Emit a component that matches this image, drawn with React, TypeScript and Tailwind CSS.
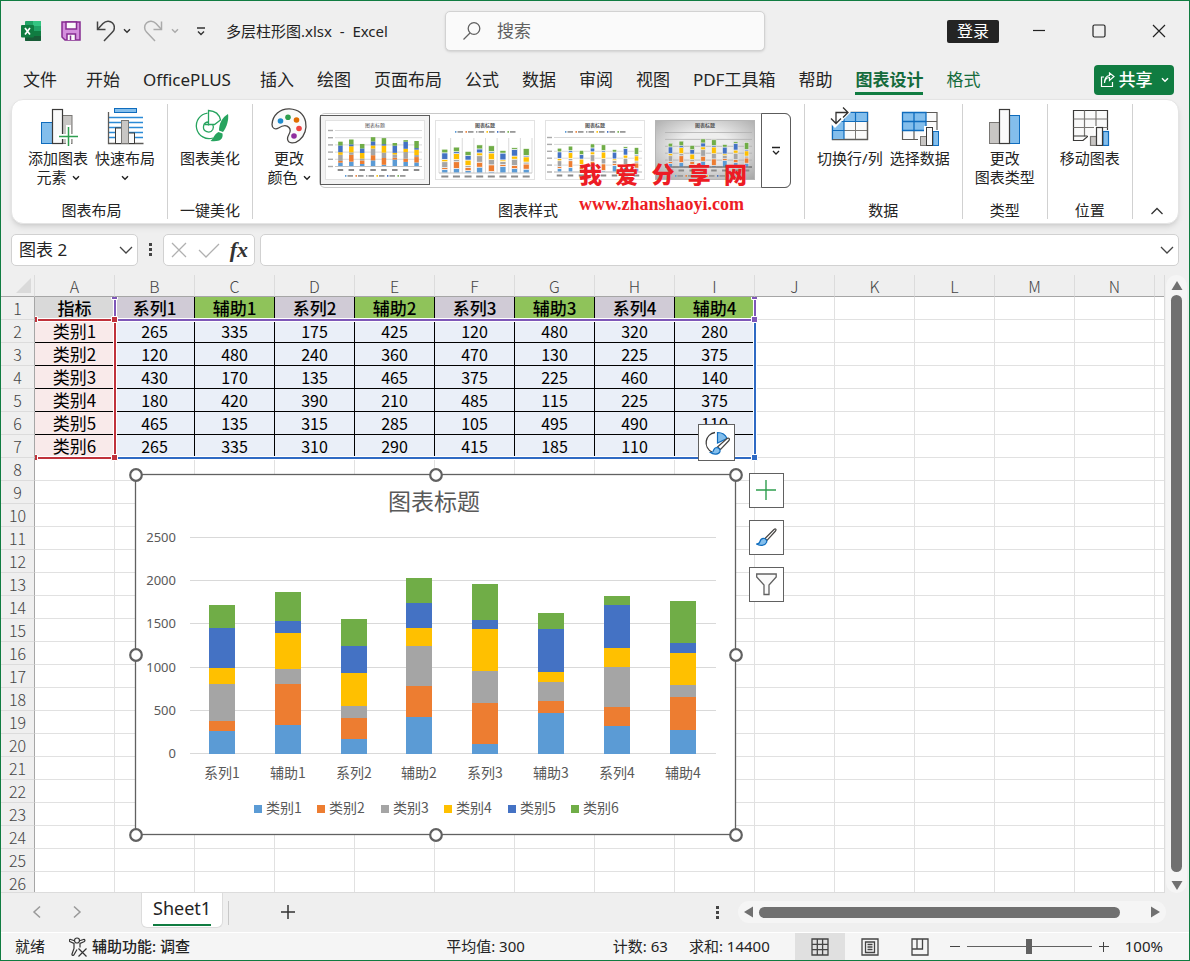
import { useState } from "react"
import type { ReactNode } from "react"

const columns = ["A", "B", "C", "D", "E", "F", "G", "H", "I", "J", "K", "L", "M", "N"]
const rowCount = 26

const seriesNames = ["系列1", "辅助1", "系列2", "辅助2", "系列3", "辅助3", "系列4", "辅助4"]
const categories = [
    { name: "类别1", color: "#5b9bd5", values: [265, 335, 175, 425, 120, 480, 320, 280] },
    { name: "类别2", color: "#ed7d31", values: [120, 480, 240, 360, 470, 130, 225, 375] },
    { name: "类别3", color: "#a5a5a5", values: [430, 170, 135, 465, 375, 225, 460, 140] },
    { name: "类别4", color: "#ffc000", values: [180, 420, 390, 210, 485, 115, 225, 375] },
    { name: "类别5", color: "#4472c4", values: [465, 135, 315, 285, 105, 495, 490, 110] },
    { name: "类别6", color: "#70ad47", values: [265, 335, 310, 290, 415, 185, 110, 490] },
]

const tabs = ["文件", "开始", "OfficePLUS", "插入", "绘图", "页面布局", "公式", "数据", "审阅", "视图", "PDF工具箱", "帮助", "图表设计", "格式"]

// Stacked segments of one column, measured in chart units from the axis
function stack(index: number) {
    let base = 0
    return categories.map((category) => {
        const value = category.values[index]
        const segment = { color: category.color, from: base, to: base + value }
        base += value
        return segment
    })
}

function Chevron({ className = "" }: { className?: string }) {
    return (
        <svg width="8" height="6" viewBox="0 0 8 6" fill="none" stroke="currentColor" strokeWidth="1.4" className={className}>
            <path d="M1 1.2 4 4.3 7 1.2" />
        </svg>
    )
}

/* ---------- ribbon icons ---------- */

function AddElementIcon() {
    return (
        <svg width="40" height="40" fill="none">
            <rect x="3.5" y="16.5" width="11" height="21" fill="#83beec" stroke="#0f6cbd" />
            <rect x="24.5" y="9.5" width="9.5" height="28" fill="#c8c6c4" stroke="#797774" />
            <rect x="14.5" y="3.5" width="10" height="34" fill="#fafafa" stroke="#3b3a39" strokeWidth="1.2" />
            <path d="M30.5 19v22M19 30.5h21" stroke="#fff" strokeWidth="5" />
            <path d="M30.5 21v19M21 30.5h19" stroke="#2f9e4f" strokeWidth="1.5" />
        </svg>
    )
}

function QuickLayoutIcon() {
    return (
        <svg width="40" height="40" fill="none">
            <rect x="9.5" y="2.5" width="22" height="4" fill="#83beec" stroke="#0f6cbd" />
            <path d="M4 11.5h34M4 16.5h34M4 21.5h34M4 26.5h34M4 31.5h34" stroke="#2b8ad6" strokeWidth="1.3" />
            <path d="M3.5 6v31.5h35" stroke="#5d5b58" strokeWidth="1.3" />
            <rect x="10.5" y="22" width="6.5" height="15.5" fill="#fafafa" stroke="#3b3a39" />
            <rect x="23.5" y="27" width="6" height="10.5" fill="#fafafa" stroke="#3b3a39" />
            <rect x="16.5" y="14.5" width="7" height="23" fill="#c8c6c4" stroke="#797774" />
        </svg>
    )
}

function BeautifyIcon() {
    return (
        <svg width="40" height="40" fill="none" stroke="#27a45f" strokeWidth="1.3">
            <path d="M17.5 7.1A12.8 12.8 0 1 0 23 32" />
            <path d="M18.5 16V4.500C26 5 29.500 9 30.500 14l-6 4.500H14.500" />
            <path d="M18.500 16a5 5 0 1 0 4.300 7.500c.8-1.700.8-3.300 0-4.800M18.500 16v3.500" />
            <path d="M38 8c1 5-1 13-5 18l-4-1.5c0-7 3-13 9-16.5z" fill="#27a45f" stroke="none" />
            <path d="M28.500 26l4 1.500c1 6-3 8.500-12 7.500 3-2 3.500-7 8-9z" fill="#27a45f" stroke="none" />
        </svg>
    )
}

function PaletteIcon() {
    return (
        <svg width="40" height="40" fill="none">
            <path d="M20.5 2.8C11 2.5 3.5 9 3 18.5c0 4 3.5 5.5 6.5 3.5s7.5-4 10.5-.5c4 4.500-2 7-1.500 11.500.5 5 7.500 5 12 1C41 25.500 39.500 4 20.500 2.800z" fill="#fafafa" stroke="#484644" strokeWidth="1.3" />
            <circle cx="11.5" cy="15" r="2.8" fill="#1e8bcd" />
            <circle cx="19" cy="11.3" r="2.8" fill="#2f9e4f" />
            <circle cx="27.5" cy="14" r="2.8" fill="#e06c00" />
            <circle cx="30" cy="22.5" r="2.8" fill="#ef4444" />
            <circle cx="25" cy="30" r="2.8" fill="#8f2d9e" />
        </svg>
    )
}

function SmallBars() {
    return (
        <g>
            <path d="M18 40V29h6v-9h9v4h6v16z" fill="#fff" />
            <rect x="20.5" y="30.5" width="6" height="9" fill="#c8c6c4" stroke="#797774" />
            <rect x="33" y="25.5" width="5.5" height="14" fill="#83beec" stroke="#0f6cbd" />
            <rect x="26.500" y="21.5" width="6" height="18" fill="#fafafa" stroke="#3b3a39" />
        </g>
    )
}

function SwitchRowColumnIcon() {
    return (
        <svg width="40" height="40" fill="none">
            <path d="M2.5 6.5h35v27h-35z" fill="#fafafa" stroke="#5d5b58" strokeWidth="1.3" />
            <path d="M2.5 15.5h35v-9h-35zM2.5 6.5h11.500v27h-11.500z" fill="#83beec" />
            <path d="M14 24.5h23.5M25.5 15.5v18" stroke="#797774" />
            <path d="M14 6.5h23.5v9H14zM25.5 6.5v9M2.5 6.5H14v27H2.5zM2.5 24.5H14M2.5 15.5H14" stroke="#0f6cbd" strokeWidth="1.2" />
            <path d="M37.500 15.500v18H2.500" stroke="#5d5b58" strokeWidth="1.2" />
            <path d="M0 0h15l6 6L5 22l-5-5z" fill="#fff" />
            <path d="M6 17.500V6.500h12M13 1.500l5 5-5 5M1 12.500l5 5 5-5" stroke="#323130" strokeWidth="1.3" />
        </svg>
    )
}

function SelectDataIcon() {
    return (
        <svg width="40" height="40" fill="none">
            <path d="M2.5 6.5H37v27H2.5z" fill="#fafafa" />
            <path d="M2.5 6.5H26v18H2.5z" fill="#83beec" />
            <path d="M26 6.5h11v27H2.5v-9M26 15.5h11M14 24.5v9M26 24.5h11" stroke="#5d5b58" strokeWidth="1.2" />
            <path d="M2.5 6.5H26v18H2.5zM14 6.5v18M2.5 15.5H26" stroke="#0f6cbd" strokeWidth="1.3" />
            <SmallBars />
        </svg>
    )
}

function ChartTypeIcon() {
    return (
        <svg width="40" height="40" fill="none">
            <rect x="4.5" y="16.5" width="10" height="21" fill="#c8c6c4" stroke="#797774" />
            <rect x="24.5" y="9.5" width="10" height="28" fill="#83beec" stroke="#0f6cbd" />
            <rect x="14.5" y="3.5" width="10" height="34" fill="#fafafa" stroke="#3b3a39" strokeWidth="1.2" />
        </svg>
    )
}

function MoveChartIcon() {
    return (
        <svg width="40" height="40" fill="none" strokeWidth="1.2">
            <path d="M3.5 4.5h34v26h-20l-4.5 4H3.5z" fill="#fafafa" stroke="#3b3a39" />
            <path d="M3.5 13h34M3.5 21.5h34M14.5 4.5v26M26 4.5v26" stroke="#797774" />
            <path d="M3.5 30h14" stroke="#3b3a39" />
            <SmallBars />
        </svg>
    )
}

function BrushIcon() {
    return (
        <svg width="21" height="21" fill="none">
            <path d="M9 11.5 18 2.500c1.500-1.300 2.700 0 1.500 1.500L11 13.500z" fill="#fff" stroke="#484644" strokeWidth="1.2" />
            <path d="M8.500 11.500c-2.500-.5-4 1-4.500 3-.4 1.500-1.500 2.500-3.500 2.500 3 2 8.500 2 10-1.500.8-2-.5-3.500-2-4z" fill="#83beec" stroke="#0f6cbd" strokeWidth="1.2" />
        </svg>
    )
}

/* ---------- title bar and ribbon tabs ---------- */

function TitleBar() {
    return (
        <header className="flex h-[60px] shrink-0 items-center">
            <div className="flex w-[444px] shrink-0 items-center pl-5">
                <svg width="20" height="20" viewBox="0 0 20 20" aria-label="Excel">
                    <rect x="4" width="16" height="20" rx="1" fill="#21a366" />
                    <path d="M12 0h7a1 1 0 0 1 1 1v4h-8z" fill="#33c481" />
                    <path d="M4 5h8v5H4z" fill="#107c41" />
                    <path d="M12 10h8v5h-8z" fill="#107c41" />
                    <path d="M4 10h8v5H4z" fill="#185c37" />
                    <path d="M4 15h16v4a1 1 0 0 1-1 1H5a1 1 0 0 1-1-1z" fill="#185c37" />
                    <rect y="4" width="13" height="12.5" rx="1" fill="#107c41" />
                    <path d="M4 7l5 6.5M9 7l-5 6.5" stroke="#fff" strokeWidth="1.7" />
                </svg>
                <button aria-label="保存" className="ml-5">
                    <svg width="20" height="20" fill="none" stroke="#862d91" strokeWidth="1.5">
                        <path d="M1 1h18v18H4l-3-3z" fill="#d48fdd" />
                        <path d="M5 1h10.5v7H5z" fill="#fafafa" />
                        <path d="M6 19v-6h8.5v6" fill="#fafafa" />
                        <path d="M9.5 14.5V19" />
                    </svg>
                </button>
                <button aria-label="撤消" className="ml-[14px]">
                    <svg width="20" height="22" fill="none" stroke="#444" strokeWidth="1.5">
                        <path d="M2.500 1.500V9.500h8" />
                        <path d="M2.500 9.500 8 3.500c3-3 7-3 9.500-.5s2.500 6.500 0 9L9 21" />
                    </svg>
                </button>
                <button aria-label="撤消列表" className="ml-2 text-[#333]"><Chevron /></button>
                <button aria-label="恢复" className="ml-3">
                    <svg width="20" height="22" fill="none" stroke="#aaa" strokeWidth="1.5">
                        <path d="M18.500 1.500v8h-8" />
                        <path d="M18.500 9.500 13 3.500C10 .5 6 .5 3.500 3s-2.500 6.500 0 9l8.500 9" />
                    </svg>
                </button>
                <button aria-label="恢复列表" className="ml-2 text-[#aaa]"><Chevron /></button>
                <button aria-label="自定义快速访问工具栏" className="ml-[17px]">
                    <svg width="10" height="10" fill="none" stroke="#333" strokeWidth="1.4">
                        <path d="M1 2h8M2 5.500l3 3 3-3" />
                    </svg>
                </button>
                <h1 className="ml-5 text-[15px] whitespace-pre">多层柱形图.xlsx  -  Excel</h1>
            </div>
            <label className="flex h-10 w-80 items-center rounded-[5px] border border-[#d2d2d2] bg-[#fafafa] px-4 shadow-sm">
                <svg width="19" height="20" fill="none" stroke="#616161" strokeWidth="1.3">
                    <circle cx="12" cy="7.5" r="5.8" />
                    <path d="M8 12 1.5 18.5" />
                </svg>
                <input type="search" aria-label="搜索" placeholder="搜索" className="ml-4 min-w-0 flex-1 bg-transparent text-[17px] outline-none placeholder:text-[#616161]" />
            </label>
            <div className="ml-auto flex items-center">
                <button className="mr-[10px] h-[23px] rounded-xs bg-[#242424] px-[10px] text-base leading-[23px] text-white">登录</button>
                <button aria-label="最小化" className="flex h-10 w-[60px] items-center justify-center">
                    <svg width="14" height="14" stroke="#222" strokeWidth="1.2"><path d="M1 6.5h12" /></svg>
                </button>
                <button aria-label="最大化" className="flex h-10 w-[60px] items-center justify-center">
                    <svg width="14" height="14" fill="none" stroke="#222" strokeWidth="1.2"><rect x="1" y="1" width="12" height="12" rx="1.5" /></svg>
                </button>
                <button aria-label="关闭" className="flex h-10 w-[60px] items-center justify-center">
                    <svg width="14" height="14" stroke="#222" strokeWidth="1.2"><path d="M1 1l12 12M13 1 1 13" /></svg>
                </button>
            </div>
        </header>
    )
}

function TabBar() {
    const [active, setActive] = useState("图表设计")

    const tabClass = (tab: string) => {
        if (tab === active) return "border-[#107c41] font-bold text-[#146b3c]"
        if (tab === "格式" || tab === "图表设计") return "border-transparent text-[#146b3c]"
        if (tab === "OfficePLUS") return "border-transparent pr-[6px]"
        return "border-transparent"
    }

    return (
        <nav className="flex h-[38px] shrink-0 items-start pr-[15px] pl-[22px]">
            <div className="flex gap-[23px] pt-[7px]">
                {tabs.map((tab) => (
                    <button
                        key={tab}
                        onClick={() => setActive(tab)}
                        className={`border-b-[3px] pb-px text-[17px] leading-[23px] whitespace-nowrap first:mr-[6px] ${tabClass(tab)}`}
                    >
                        {tab}
                    </button>
                ))}
            </div>
            <button className="mt-1 ml-auto flex h-[30px] w-20 shrink-0 items-center justify-center rounded bg-[#107c41] text-[17px] leading-[22px] font-medium text-white">
                <svg width="15" height="16" fill="none" stroke="#fff" strokeWidth="1.2">
                    <path d="M4 5H1.5v9.500h11V10" />
                    <path d="M4.500 11c.5-4 2.500-5.500 5-5.500V8.500l4.500-4L9.500 1v2.500C6 4 4.500 7 4.500 11z" />
                </svg>
                <span className="mr-2 ml-1">共享</span>
                <Chevron />
            </button>
        </nav>
    )
}

/* ---------- ribbon ---------- */

type GroupProps = { label: string; className?: string; children: ReactNode }

function RibbonGroup({ label, className = "px-3", children }: GroupProps) {
    return (
        <section className={`relative flex shrink-0 flex-col justify-between border-r border-[#d1d1d1] ${className}`}>
            <div className="flex items-start gap-[7px] pt-[2px]">{children}</div>
            <h2 className="-mb-px text-center text-[15px] leading-[19px]">{label}</h2>
        </section>
    )
}

type RibbonButtonProps = { icon: ReactNode; lines: string[]; menu?: boolean }

function RibbonButton({ icon, lines, menu }: RibbonButtonProps) {
    return (
        <button className="flex min-w-12 flex-col items-center text-[15px] leading-[19px] whitespace-nowrap">
            {icon}
            {lines.map((line, i) => (
                <span key={line} className={`flex items-center gap-[5px] ${i === 0 ? "mt-[3px]" : ""}`}>
                    {line}
                    {menu && i === 1 && <Chevron />}
                </span>
            ))}
            {menu && lines.length === 1 && <Chevron className="mt-[7px]" />}
        </button>
    )
}

type StyleVariant = "plain" | "dropped" | "lined" | "shaded"

// Small preview of the same chart in one of the gallery styles
function StylePreview({ variant }: { variant: StyleVariant }) {
    const shaded = variant === "shaded"
    const plain = variant === "plain"
    const base = plain ? 46.5 : variant === "dropped" ? 53 : shaded ? 47 : 52
    const scale = plain ? 0.0144 : 0.0138
    const left = plain || shaded ? 10 : variant === "dropped" ? 4 : 9
    const step = (97 - left) / 8
    const legendY = plain || shaded ? 55 : 11

    return (
        <svg width="100" height="60" viewBox="0 0 100 60">
            <defs>
                <radialGradient id="previewShade" cx="0.5" cy="0.45" r="0.75">
                    <stop offset="0.35" stopColor="#eeeeee" />
                    <stop offset="1" stopColor="#a3a3a3" />
                </radialGradient>
            </defs>
            <rect x="0.5" y="0.5" width="99" height="59" fill={shaded ? "url(#previewShade)" : "#fff"} stroke={shaded ? "#b5b5b5" : "#e2e2e2"} />
            <text x="50" y="7" textAnchor="middle" fontSize="5" fontWeight={plain ? 400 : 700} fill="#555">图表标题</text>
            {variant === "dropped"
                ? [0, 1, 2, 3, 4, 5, 6, 7, 8].map((i) => (
                    <path key={i} d={`M${left + i * step} 18v35`} stroke="#d0d0d0" strokeWidth="0.8" />
                ))
                : [0, 1, 2, 3, 4, 5].map((i) => (
                    <g key={i}>
                        <path d={`M${left} ${base - i * 500 * scale}H97`} stroke={shaded ? "#b0b0b0" : "#cfcfcf"} strokeWidth="0.8" />
                        {!shaded && <rect x={left - 7} y={base - i * 500 * scale - 0.7} width="5" height="1.4" fill="#aaa" />}
                    </g>
                ))}
            {seriesNames.map((name, i) => {
                const width = variant === "dropped" ? 6 : 4.5
                const x = left + step * (i + 0.5) - width / 2
                return (
                    <g key={name}>
                        {stack(i).map((s) => (
                            <rect
                                key={s.color}
                                x={x}
                                y={base - s.to * scale}
                                width={width}
                                height={(s.to - s.from) * scale}
                                fill={s.color}
                                stroke={plain ? "none" : shaded ? "#ececec" : "#fff"}
                                strokeWidth="0.6"
                            />
                        ))}
                        <rect x={x - 0.5} y={base + 2.5} width={width + 1} height="2" fill="#8a8a8a" />
                    </g>
                )
            })}
            <path d={`M${left} ${base}H97`} stroke={shaded ? "#555" : "#c4c4c4"} strokeWidth="1" />
            {categories.map((c, i) => (
                <g key={c.name}>
                    <rect x={20 + i * 10.5} y={legendY} width="1.4" height="1.8" fill={c.color} />
                    <rect x={22.5 + i * 10.5} y={legendY} width="5.5" height="1.8" fill="#9a9a9a" />
                </g>
            ))}
        </svg>
    )
}

function StyleGallery() {
    const [selected, setSelected] = useState<StyleVariant>("plain")
    const variants: StyleVariant[] = ["plain", "dropped", "lined", "shaded"]

    return (
        <div className="-ml-px mt-[7px] flex h-[75px] w-[472px] rounded-md border border-[#c8c8c8]">
            {variants.map((variant, i) => (
                <button
                    key={variant}
                    aria-label={`样式 ${i + 1}`}
                    onClick={() => setSelected(variant)}
                    className={`mt-px flex h-[70px] w-[110px] shrink-0 items-center justify-center border ${variant === selected ? "border-[#5c5c5c] bg-[#f3f3f3]" : "border-transparent"}`}
                >
                    <StylePreview variant={variant} />
                </button>
            ))}
            <button aria-label="其他样式" className="-my-px -mr-px ml-auto flex w-[30px] items-center justify-center rounded-r-md border border-[#5c5c5c]">
                <svg width="10" height="10" fill="none" stroke="#222" strokeWidth="1.3">
                    <path d="M1 1.5h8M2 5l3 3 3-3" />
                </svg>
            </button>
        </div>
    )
}

function Ribbon() {
    return (
        <div className="mx-[10px] flex shrink-0 overflow-hidden rounded-xl border border-[#e4e4e4] bg-white py-1 shadow-md">
            <div className="flex h-[115px] flex-1">
                <RibbonGroup label="图表布局" className="pr-3 pl-4">
                    <RibbonButton icon={<AddElementIcon />} lines={["添加图表", "元素"]} menu />
                    <RibbonButton icon={<QuickLayoutIcon />} lines={["快速布局"]} menu />
                </RibbonGroup>
                <RibbonGroup label="一键美化">
                    <RibbonButton icon={<BeautifyIcon />} lines={["图表美化"]} />
                </RibbonGroup>
                <RibbonGroup label="图表样式" className="pr-[13px] pl-3">
                    <RibbonButton icon={<PaletteIcon />} lines={["更改", "颜色"]} menu />
                    <StyleGallery />
                    <div className="pointer-events-none absolute top-[56px] left-[326px] w-[168px] text-[#ed1c24]">
                        <div className="flex justify-between text-[23px] leading-[28px] font-black">
                            {["我", "爱", "分", "享", "网"].map((ch) => <span key={ch}>{ch}</span>)}
                        </div>
                        <div className="mt-1 font-['Liberation_Serif',serif] text-[18px] leading-6 font-bold">www.zhanshaoyi.com</div>
                    </div>
                </RibbonGroup>
                <RibbonGroup label="数据">
                    <RibbonButton icon={<SwitchRowColumnIcon />} lines={["切换行/列"]} />
                    <RibbonButton icon={<SelectDataIcon />} lines={["选择数据"]} />
                </RibbonGroup>
                <RibbonGroup label="类型">
                    <RibbonButton icon={<ChartTypeIcon />} lines={["更改", "图表类型"]} />
                </RibbonGroup>
                <RibbonGroup label="位置">
                    <RibbonButton icon={<MoveChartIcon />} lines={["移动图表"]} />
                </RibbonGroup>
                <button aria-label="折叠功能区" className="mt-auto mr-[14px] ml-auto">
                    <svg width="14" height="14" fill="none" stroke="#333" strokeWidth="1.3"><path d="M1.5 9 7 3.5 12.5 9" /></svg>
                </button>
            </div>
        </div>
    )
}

function FormulaBar() {
    return (
        <div className="mt-[10px] flex h-8 shrink-0 items-center px-[10px]">
            <div className="flex h-full w-[127px] items-center rounded-[5px] border border-[#d1d1d1] bg-white pr-1 pl-[7px]">
                <input aria-label="名称框" defaultValue="图表 2" className="w-0 flex-1 bg-transparent text-[17px] outline-none" />
                <button aria-label="名称列表">
                    <svg width="14" height="10" fill="none" stroke="#444" strokeWidth="1.3"><path d="M1 2l6 6 6-6" /></svg>
                </button>
            </div>
            <svg width="4" height="14" className="mr-[10px] ml-[11px]" fill="#444">
                <path d="M0 0h3v3H0zM0 5h3v3H0zM0 10h3v3H0z" />
            </svg>
            <div className="flex h-full w-[92px] items-center justify-between rounded-[5px] border border-[#d1d1d1] bg-white px-[6px]">
                <button aria-label="取消">
                    <svg width="18" height="18" fill="none" stroke="#b0b0b0" strokeWidth="1.3"><path d="M2 2l14 14M16 2 2 16" /></svg>
                </button>
                <button aria-label="输入">
                    <svg width="22" height="18" fill="none" stroke="#b0b0b0" strokeWidth="1.3"><path d="M1 9l7 7L21 3" /></svg>
                </button>
                <button aria-label="插入函数" className="font-['Liberation_Serif',serif] text-[22px] leading-7 font-bold text-[#333] italic">fx</button>
            </div>
            <div className="ml-[5px] flex h-full flex-1 items-center rounded-[5px] border border-[#d1d1d1] bg-white pr-1 pl-2">
                <input aria-label="编辑栏" className="w-0 flex-1 bg-transparent text-[17px] outline-none" />
                <button aria-label="展开编辑栏">
                    <svg width="14" height="10" fill="none" stroke="#444" strokeWidth="1.3"><path d="M1 2l6 6 6-6" /></svg>
                </button>
            </div>
        </div>
    )
}

/* ---------- worksheet ---------- */

function cellText(row: number, col: number) {
    if (row > 7 || col > 8) return ""
    if (row === 1) return col === 0 ? "指标" : seriesNames[col - 1]
    const category = categories[row - 2]
    return col === 0 ? category.name : category.values[col - 1]
}

function cellClass(row: number, col: number) {
    if (row > 7 || col > 8) return "border-[#e1e1e1]"
    if (row === 1) {
        if (col === 0) return "border-black bg-[#d9d9d9] text-[17px] font-medium"
        return col % 2 ? "border-black bg-[#d0cbd6] text-[17px] font-medium" : "border-black bg-[#8fc35a] text-[17px] font-medium"
    }
    return col === 0 ? "border-black bg-[#f9eaea] text-[17px]" : "border-black bg-[#eaeff8] text-[16px]"
}

function SheetTable() {
    const rows = Array.from({ length: rowCount }, (_, i) => i + 1)
    return (
        <table className="w-full table-fixed border-separate border-spacing-0 text-center font-['Noto_Sans_CJK_SC',sans-serif] text-[16px] leading-5 text-black">
            <colgroup>
                <col className="w-[34px]" />
                {columns.map((c) => <col key={c} className="w-20" />)}
                <col />
            </colgroup>
            <thead>
                <tr className="h-[22px] bg-[#efefef] text-[#444]">
                    <th aria-label="全选" className="border-r border-b border-r-[#dcdcdc] border-b-[#a6a6a6] p-0">
                        <svg width="15" height="15" className="mr-[3px] ml-auto"><path d="M15 0v15H0z" fill="#dadada" /></svg>
                    </th>
                    {columns.map((c) => (
                        <th key={c} className="border-r border-b border-r-[#dcdcdc] border-b-[#a6a6a6] p-0 font-light">{c}</th>
                    ))}
                    <th className="border-b border-[#a6a6a6] p-0" />
                </tr>
            </thead>
            <tbody>
                {rows.map((row) => (
                    <tr key={row} className="h-[23px]">
                        <th className="border-r border-b border-r-[#a6a6a6] border-b-[#dcdcdc] bg-[#efefef] p-0 font-light text-[#444]">{row}</th>
                        {columns.map((c, col) => (
                            <td key={c} className={`border-r border-b p-0 ${cellClass(row, col)}`}>{cellText(row, col)}</td>
                        ))}
                        <td className="border-b border-[#e1e1e1] p-0" />
                    </tr>
                ))}
            </tbody>
        </table>
    )
}

// Coloured outlines round the chart's source ranges, starting at cell A1
function RangeMarks() {
    return (
        <svg width="724" height="164" className="pointer-events-none absolute top-[22px] left-[34px]" fill="none">
            <path d="M80 0v161M0 23h721M720 0v161M0 161h721" stroke="#fff" strokeWidth="4" />
            <path d="M80 0v21M83 23h634M720 0v21" stroke="#7e57b8" strokeWidth="2" />
            <path d="M720 26v132M83 161h634" stroke="#2f6ac4" strokeWidth="2" />
            <path d="M2 23h75M80 26v132M2 161h75" stroke="#c0323b" strokeWidth="2" />
            <g stroke="#fff">
                <path d="M76.5 19.5h6v6h-6zM76.5 157.5h6v6h-6zM-2.5 19.5h5v6h-5zM-2.5 157.5h5v6h-5z" fill="#c0323b" />
                <path d="M716.5 19.5h6v6h-6zM716.5-3.5h6v6h-6zM76.5-3.5h6v6h-6z" fill="#7e57b8" />
                <path d="M716.5 157.5h6v6h-6z" fill="#2f6ac4" />
            </g>
        </svg>
    )
}

function ChartObject() {
    const top = 70
    const bottom = 286
    const left = 61
    const step = 65.8
    const y = (value: number) => Math.round(bottom - (value / 2500) * (bottom - top))

    return (
        <svg width="614" height="374" role="img" aria-label="图表标题" className="block">
            <rect x="6.5" y="6.5" width="600" height="360" fill="#fff" stroke="#616161" strokeWidth="1.3" />
            <text x="305" y="42" textAnchor="middle" fontSize="23" fill="#595959" className="font-['Noto_Sans_CJK_SC',sans-serif]">图表标题</text>
            {[0, 500, 1000, 1500, 2000, 2500].map((tick) => (
                <g key={tick}>
                    <path d={`M${left} ${y(tick) - 0.5}H587`} stroke="#d9d9d9" />
                    <text x="47" y={y(tick) + 4} textAnchor="end" fontSize="13" fill="#595959" className="font-['Noto_Sans',sans-serif]">{tick}</text>
                </g>
            ))}
            {seriesNames.map((name, i) => {
                const center = Math.round(left + step * (i + 0.5) - 1)
                return (
                    <g key={name}>
                        {stack(i).map((s) => (
                            <rect key={s.color} x={center - 13} y={y(s.to)} width="26" height={y(s.from) - y(s.to)} fill={s.color} />
                        ))}
                        <text x={center} y="310" textAnchor="middle" fontSize="14" fill="#595959" className="font-['Noto_Sans_CJK_SC',sans-serif]">{name}</text>
                    </g>
                )
            })}
            {categories.map((c, i) => (
                <g key={c.name}>
                    <rect x={Math.round(125 + i * 63.4)} y="337" width="8" height="8" fill={c.color} />
                    <text x={Math.round(137 + i * 63.4)} y="345" fontSize="14" fill="#595959" className="font-['Noto_Sans_CJK_SC',sans-serif]">{c.name}</text>
                </g>
            ))}
            {[7, 307, 607].map((cx) => [7, 187, 367].map((cy) => (
                (cx !== 307 || cy !== 187) && <circle key={`${cx}-${cy}`} cx={cx} cy={cy} r="5.8" fill="#fff" stroke="#616161" strokeWidth="2.2" />
            )))}
        </svg>
    )
}

function ChartTools() {
    const buttonClass = "flex size-[35px] items-center justify-center border border-[#616161] bg-white"
    return (
        <div className="mt-[5px] ml-[6px] flex flex-col gap-3">
            <button aria-label="图表元素" className={buttonClass}>
                <svg width="21" height="21" stroke="#2f9e4f" strokeWidth="1.4"><path d="M10 0v20M0 10h20" /></svg>
            </button>
            <button aria-label="图表样式" className={buttonClass}><BrushIcon /></button>
            <button aria-label="图表筛选器" className={buttonClass}>
                <svg width="21" height="23" fill="#fafafa" stroke="#616161" strokeWidth="1.3">
                    <path d="M.7 1h19.500v3L13 12v9.500H8V12L.7 4z" />
                </svg>
            </button>
        </div>
    )
}

function VerticalScroll() {
    return (
        <div className="mr-[2px] ml-px flex w-[21px] shrink-0 flex-col items-center rounded-full bg-[#f5f5f5] pt-[6px] pb-[3px]">
            <button aria-label="向上滚动"><svg width="12" height="9" className="block"><path d="M6 0l5.5 9H.5z" fill="#707070" /></svg></button>
            <div className="my-[5px] w-[11px] flex-1 rounded-md bg-[#707070]" />
            <button aria-label="向下滚动" className="mt-1"><svg width="12" height="9" className="block"><path d="M6 9l5.5-9H.5z" fill="#707070" /></svg></button>
        </div>
    )
}

function Worksheet() {
    return (
        <main className="mt-[9px] flex min-h-0 flex-1">
            <div className="relative min-w-0 flex-1 overflow-hidden border-r border-b border-[#dcdcdc] bg-white">
                <SheetTable />
                <RangeMarks />
                <button aria-label="快速分析" className="absolute top-[149px] left-[697px] flex size-[37px] items-center justify-center border border-[#616161] bg-white">
                    <svg width="26" height="26" fill="none">
                        <path d="M11 2.500a10.300 10.300 0 0 0-3 19.500" stroke="#3b3a39" strokeWidth="1.3" />
                        <path d="M13.5 2.5V13l9.500-4.500c-1.500-3.700-5-6-9.500-6z" fill="#83beec" stroke="#0f6cbd" strokeWidth="1.2" />
                        <path d="M13.5 17 23 8.500c1.500-1.200 3.200.3 2 2l-8.500 9z" fill="#fff" stroke="#484644" strokeWidth="1.2" />
                        <path d="M13 17.5c-3 0-3 2-4 4-.5.8-1.5 1-2.500 1 3 2.500 8.500 2 9.500-1 .5-2-1-3.500-3-4z" fill="#83beec" stroke="#0f6cbd" strokeWidth="1.2" />
                    </svg>
                </button>
                <div className="absolute top-[193px] left-[128px] flex items-start">
                    <ChartObject />
                    <ChartTools />
                </div>
            </div>
            <VerticalScroll />
        </main>
    )
}

/* ---------- bottom bars ---------- */

function SheetTabs() {
    return (
        <div className="flex h-[39px] shrink-0 items-start pr-[23px] pl-[30px]">
            <button aria-label="上一个工作表" className="mt-3">
                <svg width="12" height="14" fill="none" stroke="#999" strokeWidth="1.5"><path d="M9 1.5 3 7l6 5.500" /></svg>
            </button>
            <button aria-label="下一个工作表" className="mt-3 ml-[29px]">
                <svg width="12" height="14" fill="none" stroke="#999" strokeWidth="1.5"><path d="M2 1.5 8 7l-6 5.500" /></svg>
            </button>
            <button className="ml-[57px] h-[35px] rounded-b-md border border-t-0 border-[#dcdcdc] bg-white px-[11px]">
                <span className="block border-b-2 border-[#107c41] pb-px text-[18px] leading-[29px]">Sheet1</span>
            </button>
            <div className="mt-2 ml-[5px] h-6 w-px bg-[#c8c8c8]" />
            <button aria-label="新工作表" className="mt-[11px] ml-[51px]">
                <svg width="16" height="16" stroke="#333" strokeWidth="1.5"><path d="M8 1v14M1 8h14" /></svg>
            </button>
            <svg width="3" height="14" className="mt-[13px] mr-[19px] ml-auto" fill="#444">
                <path d="M0 0h3v3H0zM0 5h3v3H0zM0 10h3v3H0z" />
            </svg>
            <div className="mt-2 flex h-[22px] w-[428px] items-center rounded-full bg-[#f5f5f5] px-[6px]">
                <button aria-label="向左滚动"><svg width="9" height="12" className="block"><path d="M0 6l9-5.5v11z" fill="#707070" /></svg></button>
                <div className="ml-[6px] h-[11px] w-[361px] rounded-md bg-[#707070]" />
                <button aria-label="向右滚动" className="ml-auto"><svg width="9" height="12" className="block"><path d="M9 6 0 .5v11z" fill="#707070" /></svg></button>
            </div>
        </div>
    )
}

function StatusBar() {
    const [zoom, setZoom] = useState(50)

    return (
        <footer className="flex h-7 shrink-0 items-center border-t border-white bg-[#f5f5f5] pr-[26px] pl-[14px] text-[15px] whitespace-nowrap">
            <span>就绪</span>
            <button className="ml-6 flex items-center gap-[5px] font-medium">
                <svg width="18" height="20" fill="none" stroke="#333" strokeWidth="1.2">
                    <circle cx="8" cy="3.5" r="2.5" />
                    <path d="M10.500 3.800 14.500 2.500c1.500-.3 2 1.500.5 2.200L11 6.500v4M5.500 3.800 1.700 2.500C.2 2.200-.2 4 1.200 4.700L5 6.500v5l-2 5.500c-.3 1.500 1.400 2 2 .7L8 12.500" />
                    <path d="M9.500 11.500l8 8M17.500 11.500l-8 8" />
                </svg>
                辅助功能: 调查
            </button>
            <span className="mr-[88px] ml-auto">平均值: 300</span>
            <span className="mr-[21px]">计数: 63</span>
            <span className="mr-[25px]">求和: 14400</span>
            <button aria-label="普通" className="flex h-full w-[50px] items-center justify-center bg-[#e0e0e0]">
                <svg width="18" height="18" fill="none" stroke="#444" strokeWidth="1.3"><path d="M1 1h16v16H1zM1 6.300h16M1 11.600h16M6.300 1v16M11.600 1v16" /></svg>
            </button>
            <button aria-label="页面布局" className="flex h-full w-[50px] items-center justify-center">
                <svg width="18" height="18" fill="none" stroke="#444" strokeWidth="1.3"><path d="M1 1h16v16H1zM4.500 4h9v10.500h-9zM6.500 6.500h5M6.500 9h5M6.500 11.500h5" /></svg>
            </button>
            <button aria-label="分页预览" className="flex h-full w-[50px] items-center justify-center">
                <svg width="18" height="18" fill="none" stroke="#444" strokeWidth="1.3"><path d="M1 1h16v16H1zM1 11h10.500V1M6 1v10" /></svg>
            </button>
            <button aria-label="缩小" className="ml-1"><svg width="12" height="12" stroke="#444"><path d="M1 5.500h10" /></svg></button>
            <input
                type="range"
                aria-label="显示比例"
                value={zoom}
                onChange={(e) => setZoom(Number(e.target.value))}
                className="mx-[6px] h-[14px] w-[125px] appearance-none bg-transparent [&::-webkit-slider-runnable-track]:h-px [&::-webkit-slider-runnable-track]:bg-[#616161] [&::-webkit-slider-thumb]:-mt-[7px] [&::-webkit-slider-thumb]:h-[15px] [&::-webkit-slider-thumb]:w-[6px] [&::-webkit-slider-thumb]:appearance-none [&::-webkit-slider-thumb]:bg-[#616161]"
            />
            <button aria-label="放大"><svg width="12" height="12" stroke="#444"><path d="M1 5.500h10M5.500 1v10" /></svg></button>
            <span className="ml-[15px]">100%</span>
        </footer>
    )
}

export default function App() {
    return (
        <div className="flex h-screen flex-col overflow-hidden border border-[#107c41] bg-[#efefef] font-['Noto_Sans','Noto_Sans_CJK_SC',sans-serif] text-[#242424]">
            <TitleBar />
            <TabBar />
            <Ribbon />
            <FormulaBar />
            <Worksheet />
            <SheetTabs />
            <StatusBar />
        </div>
    )
}
